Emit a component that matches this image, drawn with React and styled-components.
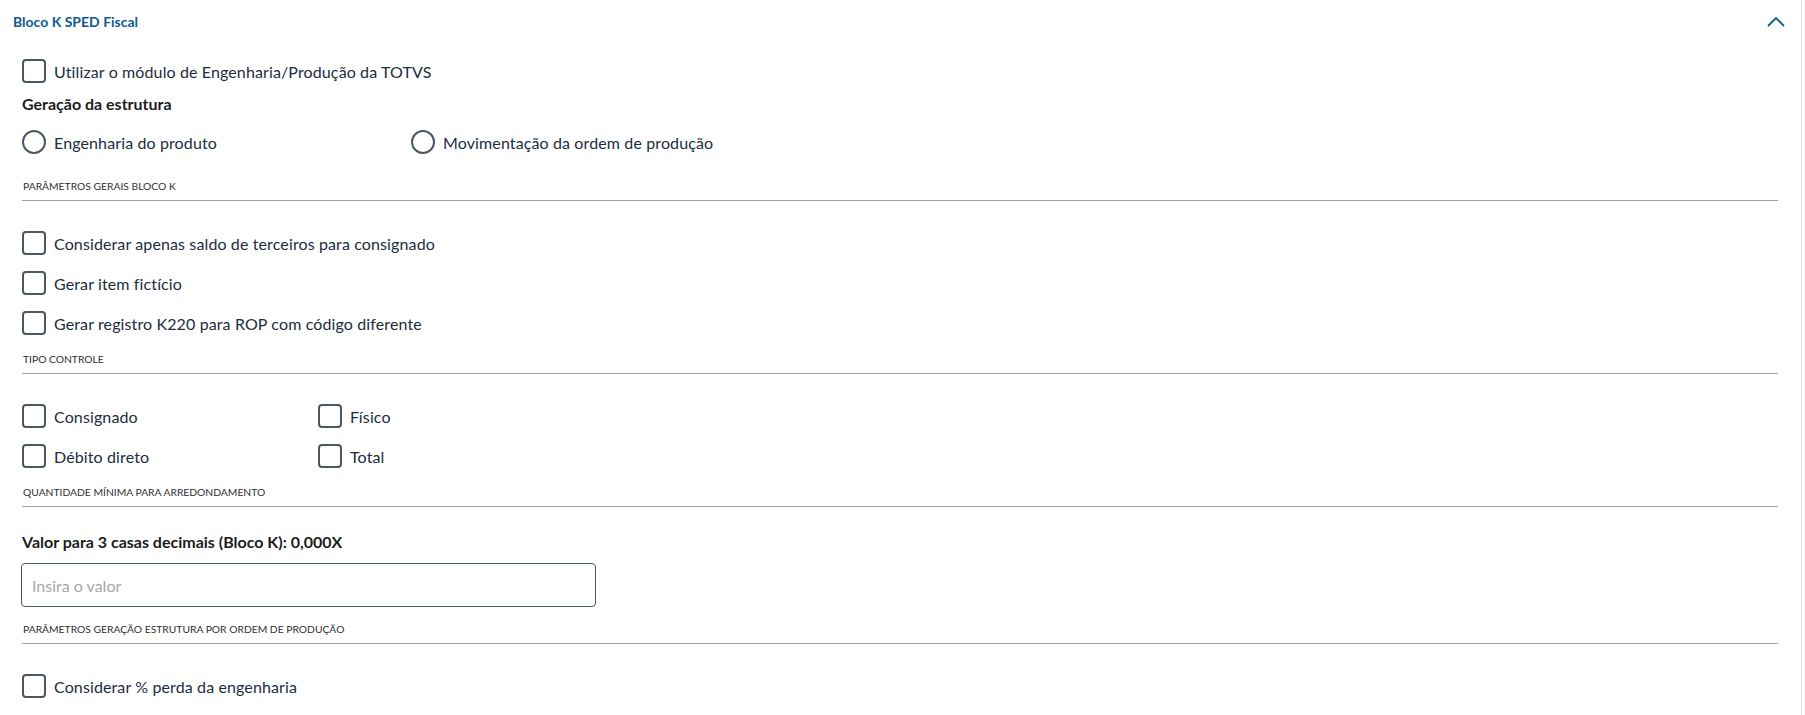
import React from 'react';
import styled, { createGlobalStyle } from 'styled-components';

const GlobalStyle = createGlobalStyle`
  html, body {
    margin: 0;
    padding: 0;
    background: #ffffff;
  }
  body {
    font-family: Lato, 'Open Sans', Arial, sans-serif;
    color: #1c2d3e;
  }
`;

const Panel = styled.section`
  width: 1802px;
  min-height: 715px;
  box-sizing: border-box;
  border-right: 1px solid #dde1e3;
  background: #fff;
`;

const Header = styled.header`
  height: 42px;
  display: flex;
  align-items: center;
  justify-content: space-between;
  padding: 0 16px 0 13px;
`;

const Title = styled.h3`
  margin: 0;
  font-size: 14px;
  font-weight: 700;
  color: #0f5a8c;
`;

const Body = styled.div`
  display: flex;
  flex-direction: column;
  padding: 0 23px 0 22px;
`;

const Row = styled.div`
  display: flex;
  align-items: center;
  height: 24px;
  margin-top: ${(p) => p.$top || 0}px;
`;

const Grid = styled.div`
  display: grid;
  grid-template-columns: ${(p) => p.$cols};
  row-gap: 16px;
  margin-top: ${(p) => p.$top || 0}px;
`;

const Stack = styled.div`
  display: flex;
  flex-direction: column;
  gap: 16px;
  margin-top: ${(p) => p.$top || 0}px;
`;

const Box = styled.span`
  width: 24px;
  height: 24px;
  box-sizing: border-box;
  border: 2px solid #4a5861;
  border-radius: ${(p) => (p.$round ? '50%' : '4px')};
  flex-shrink: 0;
  margin-right: 8px;
`;

const OptionText = styled.span`
  font-size: 16px;
  letter-spacing: 0.12px;
  color: #1c2d3e;
  white-space: nowrap;
`;

const Heading = styled.div`
  font-size: 16px;
  font-weight: 700;
  line-height: 24px;
  color: #1c1c1c;
  margin-top: ${(p) => p.$top || 0}px;
`;

const Divider = styled.div`
  font-size: 10.3px;
  line-height: 16px;
  text-transform: uppercase;
  color: #303030;
  padding: 0 0 6px 1px;
  border-bottom: 1px solid #9da3a6;
  margin-top: ${(p) => p.$top || 0}px;
`;

const Input = styled.input`
  width: 575px;
  height: 44px;
  box-sizing: border-box;
  margin: 9px 0 0 -1px;
  padding: 0 10px;
  border: 1px solid #4a5861;
  border-radius: 4px;
  font-family: inherit;
  font-size: 16px;
  color: #1c2d3e;
  outline: none;

  &::placeholder {
    color: #a7a7a7;
  }
`;

const Chevron = () => (
  <svg width="18" height="11" viewBox="0 0 18 11" fill="none">
    <path d="M1 10 L9 2 L17 10" stroke="#0f5a8c" strokeWidth="1.8" />
  </svg>
);

const Option = ({ label, round }) => (
  <Row>
    <Box $round={round} />
    <OptionText>{label}</OptionText>
  </Row>
);

export default function App() {
  return (
    <>
      <GlobalStyle />
      <Panel>
        <Header>
          <Title>Bloco K SPED Fiscal</Title>
          <Chevron />
        </Header>
        <Body>
          <Row $top={17}>
            <Box />
            <OptionText>Utilizar o módulo de Engenharia/Produção da TOTVS</OptionText>
          </Row>
          <Heading $top={9}>Geração da estrutura</Heading>
          <Grid $cols="389px 1fr" $top={14}>
            <Option round label="Engenharia do produto" />
            <Option round label="Movimentação da ordem de produção" />
          </Grid>

          <Divider $top={24}>Parâmetros gerais Bloco K</Divider>
          <Stack $top={30}>
            <Option label="Considerar apenas saldo de terceiros para consignado" />
            <Option label="Gerar item fictício" />
            <Option label="Gerar registro K220 para ROP com código diferente" />
          </Stack>

          <Divider $top={16}>Tipo controle</Divider>
          <Grid $cols="296px 1fr" $top={30}>
            <Option label="Consignado" />
            <Option label="Físico" />
            <Option label="Débito direto" />
            <Option label="Total" />
          </Grid>

          <Divider $top={16}>Quantidade mínima para arredondamento</Divider>
          <Heading $top={23}>Valor para 3 casas decimais (Bloco K): 0,000X</Heading>
          <Input placeholder="Insira o valor" />

          <Divider $top={14}>Parâmetros geração estrutura por ordem de produção</Divider>
          <Row $top={30}>
            <Box />
            <OptionText>Considerar % perda da engenharia</OptionText>
          </Row>
        </Body>
      </Panel>
    </>
  );
}
